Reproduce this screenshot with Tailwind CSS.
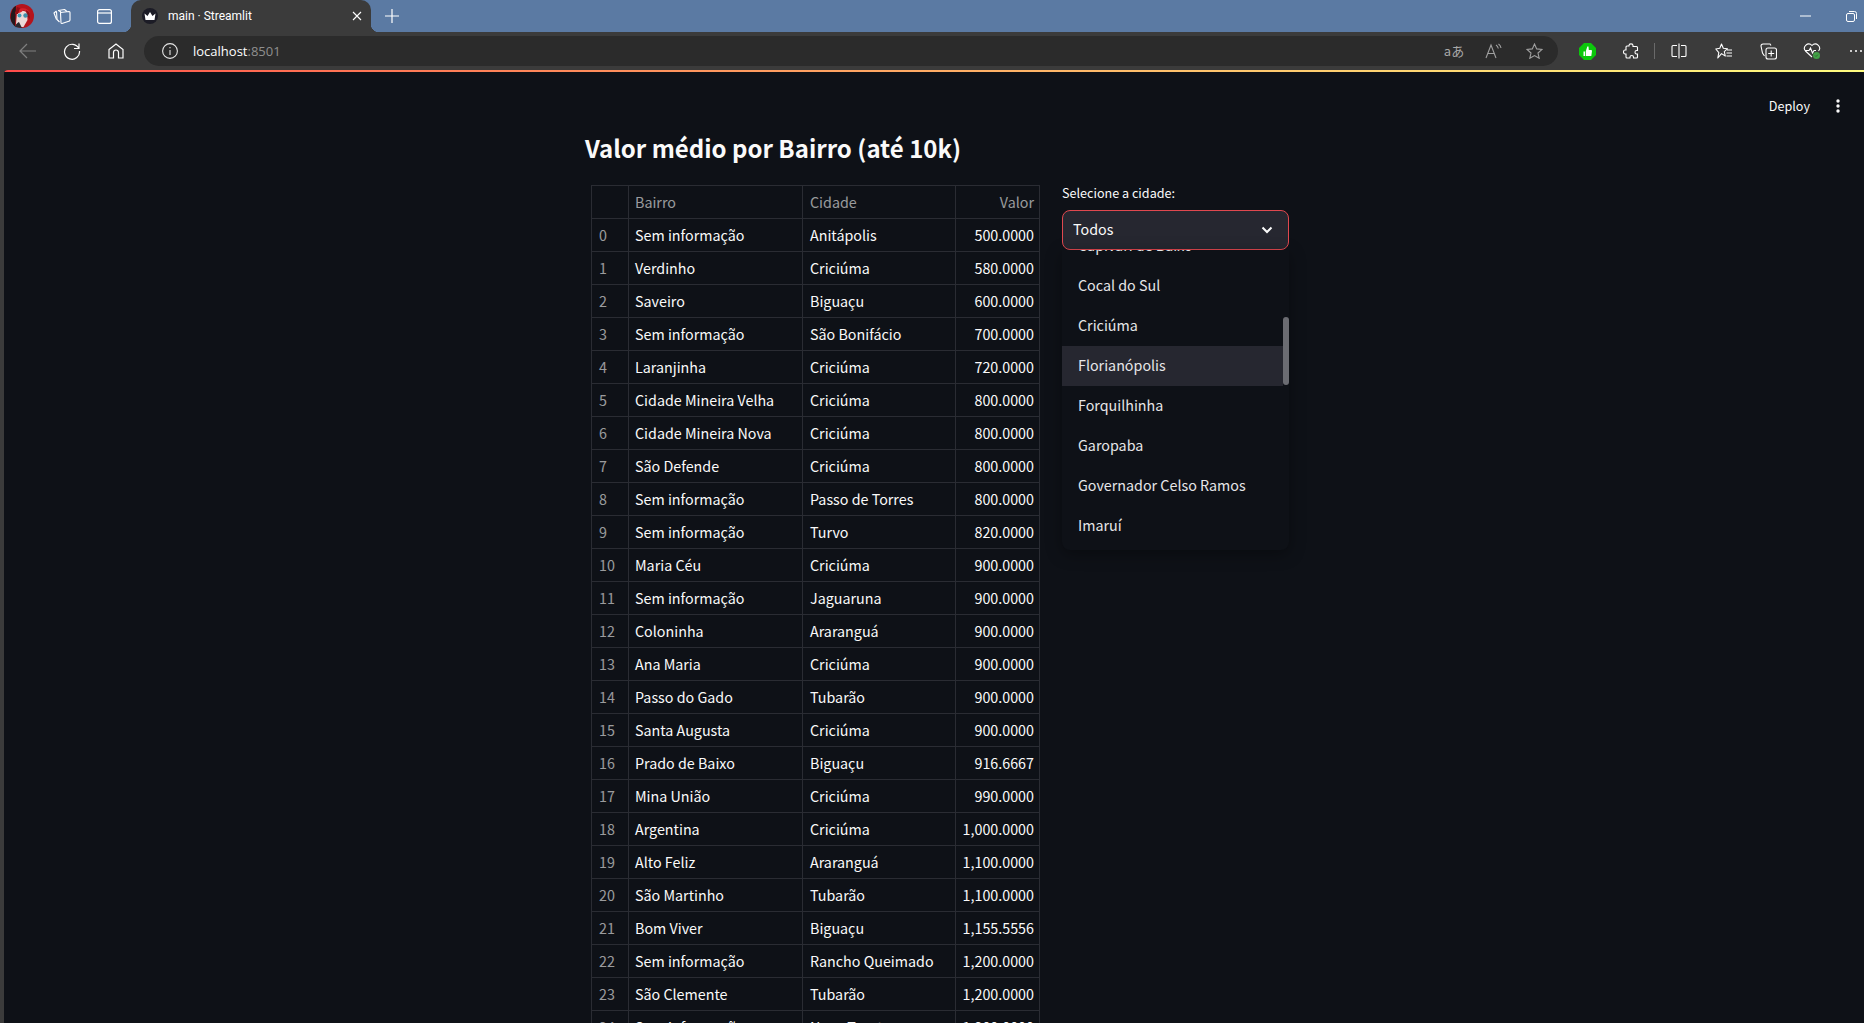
<!DOCTYPE html>
<html lang="pt-BR">
<head>
  <meta charset="UTF-8" />
  <title>main · Streamlit</title>
  <script src="https://cdn.jsdelivr.net/npm/@tailwindcss/browser@4"></script>
</head>
<body class="bg-[#0e1117] text-[#fafafa] overflow-hidden font-['Noto_Sans_CJK_SC','Noto_Sans',sans-serif]">
  <div class="h-[1023px] flex flex-col overflow-hidden">

    <!-- TAB BAR -->
    <div class="h-8 shrink-0 bg-[#5b7aa3] flex items-center text-white">
      <div class="w-11 flex justify-center">
        <svg width="24" height="24" viewBox="0 0 24 24">
          <circle cx="12" cy="12" r="12" fill="#b5141c"/>
          <path d="M0.500 14C1 7 3 3 6 2L5 22.500C2.500 20.500 1 17.500 0.500 14z" fill="#23181c"/>
          <path d="M7 9c2-3 8-3 10 0l0.500 7-4 7H9.500L6 20z" fill="#ecd8d6"/>
          <path d="M5 10c1-6 12-9 15-1-3-1-5-3-7-3-1 3-5 3-8 4z" fill="#d8222a"/>
          <path d="M5 10 7 3l3 1-2 6zM16 6l3 2 1 7-3-3z" fill="#8e0f16"/>
          <circle cx="9.500" cy="11.500" r="2" fill="#3f9ab8"/>
          <circle cx="15.500" cy="11.500" r="2.200" fill="#3f8fa8"/>
          <path d="M5 23c1-3 2-4 4-5l3 6z" fill="#2a2a30"/>
        </svg>
      </div>
      <div class="w-9 flex justify-center">
        <svg width="18" height="18" viewBox="0 0 18 18" fill="none" stroke="white" stroke-width="1.100" stroke-linejoin="round">
          <path d="M7.500 5.500 16 4.500a1 1 0 0 1 1 1V13l-0.500 1-7.500 2.500a1 1 0 0 1-1-.5z"/>
          <path d="M8 5 5.500 3.500 11.500 2.500l2.500 2M6.500 15 4 12.500 3.500 4.500"/>
          <path d="M3.500 4 1 6l2.500 6.500"/>
        </svg>
      </div>
      <div class="w-12 flex justify-center">
        <svg width="15" height="15" viewBox="0 0 15 15" fill="none" stroke="white" stroke-width="1.200">
          <rect x="0.600" y="0.600" width="13.800" height="13.800" rx="2"/>
          <path d="M0.600 4h13.800"/>
        </svg>
      </div>
      <div class="relative ml-[3px] w-[240px] h-8 bg-[#3b3b3b] rounded-t-[10px] flex items-center pl-[11px] pr-[9px]">
        <span class="absolute -left-2 bottom-0 w-2 h-2 bg-[radial-gradient(circle_at_0_0,transparent_8px,#3b3b3b_8.5px)]"></span>
        <span class="absolute -right-2 bottom-0 w-2 h-2 bg-[radial-gradient(circle_at_100%_0,transparent_8px,#3b3b3b_8.5px)]"></span>
        <span class="w-4 h-4 rounded-full bg-[#1c1c26] flex items-center justify-center">
          <svg width="12" height="10" viewBox="0 0 12 10" fill="white"><path d="M0.500 2.500 3.500 5 6 1l2.500 4 3-2.500L10.500 9h-9z"/></svg>
        </span>
        <span class="ml-[10px] flex-1 text-xs leading-4 font-['Roboto',sans-serif]">main · Streamlit</span>
        <svg width="10" height="10" viewBox="0 0 10 10" stroke="white" stroke-width="1.100"><path d="M1 1l8 8M9 1 1 9"/></svg>
      </div>
      <div class="w-[42px] flex justify-center">
        <svg width="14" height="14" viewBox="0 0 14 14" stroke="white" stroke-width="1.200"><path d="M7 0v14M0 7h14"/></svg>
      </div>
      <div class="flex-1"></div>
      <div class="w-[46px] flex justify-center">
        <svg width="11" height="2" viewBox="0 0 11 2" stroke="white"><path d="M0 1h11"/></svg>
      </div>
      <div class="w-[46px] flex justify-center mr-[-10px]">
        <svg width="11" height="11" viewBox="0 0 11 11" fill="none" stroke="white"><rect x="0.500" y="2.500" width="8" height="8" rx="1.500"/><path d="M3 0.500h5.500a2 2 0 0 1 2 2V8"/></svg>
      </div>
    </div>

    <!-- TOOLBAR -->
    <div class="h-[38px] shrink-0 bg-[#3b3b3b] flex items-start pt-1 pl-[6px] text-white overflow-hidden">
      <button class="w-11 shrink-0 h-[30px] flex items-center justify-center">
        <svg width="18" height="16" viewBox="0 0 18 16" fill="none" stroke="#808080" stroke-width="1.200"><path d="M17 8H1M8 1 1 8l7 7"/></svg>
      </button>
      <button class="w-11 shrink-0 h-[30px] flex items-center justify-center">
        <svg width="18" height="18" viewBox="0 0 18 18" fill="none" stroke="white" stroke-width="1.200"><path d="M15.800 6.500A7.500 7.500 0 1 0 16.500 9M16 1.500v5h-5"/></svg>
      </button>
      <button class="w-11 shrink-0 h-[30px] flex items-center justify-center">
        <svg width="16" height="16" viewBox="0 0 16 16" fill="none" stroke="white" stroke-width="1.200"><path d="M1 6.500 8 1l7 5.500V15h-4.500V9.500a2.500 2.500 0 0 0-5 0V15H1z"/></svg>
      </button>

      <div class="ml-[6px] w-[1414px] shrink-0 h-[30px] rounded-full bg-[#2b2b2b] flex items-center pl-[18px] pr-1">
        <svg width="16" height="16" viewBox="0 0 16 16" fill="none" stroke="#e6e6e6" stroke-width="1.100"><circle cx="8" cy="8" r="7.400"/><path d="M8 7v5M8 4v1.300"/></svg>
        <span class="ml-[15px] flex-1 text-[13px] leading-5 font-['Open_Sans',sans-serif]">localhost<span class="text-[#8f8f8f]">:8501</span></span>
        <div class="w-10 flex justify-center text-[13px] leading-5 text-[#a8a8a8] font-['Noto_Sans_CJK_JP',sans-serif]">aあ</div>
        <div class="w-10 flex justify-center">
          <svg width="18" height="16" viewBox="0 0 18 16" fill="none" stroke="#a0a0a0" stroke-width="1.100"><path d="M1 15 6 2l5 13M3 10.500h6M11 2c1.500 1 2 2 2.300 3.500M13.500 1c1.500 1 2.300 2.500 2.500 4"/></svg>
        </div>
        <div class="w-10 flex justify-center">
          <svg width="17" height="16" viewBox="0 0 17 16" fill="none" stroke="#a0a0a0" stroke-width="1.100"><path d="m8.500 1 2.200 4.900 5.300.6-4 3.500 1.200 5.300-4.700-2.700-4.700 2.700L5 10 1 6.500l5.300-.6z"/></svg>
        </div>
      </div>

      <button class="ml-[7px] w-11 shrink-0 h-[30px] flex items-center justify-center">
        <svg width="17" height="17" viewBox="0 0 17 17">
          <path d="M5 0h7l5 5v7l-5 5H5l-5-5V5z" fill="#0cc80c"/>
          <path d="M4.500 8.500H6V13H4.500zM6.800 8.200 8.300 3.500h1.200l0.300 3.500h2.700l0.500 1-0.700 5H6.800z" fill="white"/>
        </svg>
      </button>
      <button class="w-11 shrink-0 h-[30px] flex items-center justify-center">
        <svg width="16" height="17" viewBox="0 0 16 17" fill="none" stroke="white" stroke-width="1.100"><path d="M6 2.500c0-2.200 4-2.200 4 0v1h3.500a1 1 0 0 1 1 1v3h-1c-2 0-2 3.500 0 3.500h1v3a1 1 0 0 1-1 1h-3v-1c0-2-3.500-2-3.500 0v1h-3a1 1 0 0 1-1-1v-3h-1c-2 0-2-4 0-4h1v-3a1 1 0 0 1 1-1H6z"/></svg>
      </button>
      <div class="w-px shrink-0 h-4 mt-[7px] bg-[#6a6a6a] ml-px mr-[2px]"></div>
      <button class="w-11 shrink-0 h-[30px] flex items-center justify-center">
        <svg width="16" height="16" viewBox="0 0 16 16" fill="none" stroke="white" stroke-width="1.100"><path d="M6 2.500H2a1 1 0 0 0-1 1v9a1 1 0 0 0 1 1h4M10 2.500h4a1 1 0 0 1 1 1v9a1 1 0 0 1-1 1h-4M8 0.500v15"/></svg>
      </button>
      <button class="w-11 shrink-0 ml-px h-[30px] flex items-center justify-center">
        <svg width="18" height="16" viewBox="0 0 18 16" fill="none" stroke="white" stroke-width="1.100" stroke-linejoin="round"><path d="m6.500 1 1.800 4.200 4.200.5-3.200 2.900 1 4.400-3.800-2.400L2.800 15l1-5.400L0.800 6l4-0.800zM12 7h5M11.500 10h5.500M11.500 13H17"/></svg>
      </button>
      <button class="w-11 shrink-0 h-[30px] flex items-center justify-center">
        <svg width="17" height="17" viewBox="0 0 17 17" fill="none" stroke="white" stroke-width="1.100"><path d="M11 2.500 10 1H3a2 2 0 0 0-2 2l1.500 7 2 3"/><rect x="6" y="5" width="10.500" height="11" rx="2"/><path d="M11.200 7.500v6M8.200 10.500h6"/></svg>
      </button>
      <button class="w-11 shrink-0 h-[30px] flex items-center justify-center">
        <svg width="18" height="18" viewBox="0 0 18 18" fill="none" stroke="white" stroke-width="1.100">
          <path d="M9 15 2.500 9C-1 5 5 -1 9 3.500 13 -1 19 5 15.500 9"/>
          <path d="M2 8.500h4l1.500-2.500 2 5 1.500-2.500h2"/>
          <circle cx="13.500" cy="13.500" r="3.500" fill="#43a047" stroke="none"/>
          <path d="m12 13.500 1 1 2-2" stroke-width="0.800" stroke="#2e5d30"/>
        </svg>
      </button>
      <button class="w-11 shrink-0 h-[30px] flex items-center justify-center gap-[3px]">
        <span class="w-[2px] h-[2px] bg-white rounded-full"></span>
        <span class="w-[2px] h-[2px] bg-white rounded-full"></span>
        <span class="w-[2px] h-[2px] bg-white rounded-full"></span>
      </button>
    </div>

    <!-- PAGE -->
    <div class="flex-1 min-h-0 bg-[#3b3b3b] pl-1">
      <main class="relative h-full bg-[#0e1117] overflow-hidden rounded-tl-[4px]">
        <div class="h-[2px] bg-gradient-to-r from-[#ff4b4b] to-[#fffd80]"></div>

        <!-- streamlit header -->
        <div class="absolute top-[22px] right-0 flex items-center h-7 text-[12.6px]">
          <span class="leading-5">Deploy</span>
          <svg class="ml-[26px] mr-6" width="4" height="14" viewBox="0 0 4 14" fill="#fafafa">
            <circle cx="2" cy="2" r="1.700"/><circle cx="2" cy="7" r="1.700"/><circle cx="2" cy="12" r="1.700"/>
          </svg>
        </div>

        <div class="pl-[581px] pt-[56px]">
          <h3 class="text-2xl leading-10 font-semibold">Valor médio por Bairro (até 10k)</h3>

          <div class="flex mt-[17px] ml-[6px] items-start">
            <!-- TABELA -->
            <table class="w-[449px] table-fixed border-collapse text-[14.3px]">
              <colgroup>
                <col class="w-[37px]" /><col class="w-[174px]" /><col class="w-[153px]" /><col class="w-[84px]" />
              </colgroup>
              <thead>
                <tr class="h-[33px] text-[#fafafa]/60">
                  <th class="border border-[#2a2c33] px-[7px] font-normal"></th>
                  <th class="border border-[#2a2c33] px-[6px] font-normal text-left">Bairro</th>
                  <th class="border border-[#2a2c33] px-[7px] font-normal text-left">Cidade</th>
                  <th class="border border-[#2a2c33] px-[5px] font-normal text-right">Valor</th>
                </tr>
              </thead>
              <tbody id="tabela"></tbody>
            </table>

            <!-- SELECT -->
            <div class="ml-[22px] w-[227px] relative">
              <label class="block text-[12.6px] leading-5 mt-[-2px] mb-[7px]">Selecione a cidade:</label>
              <div class="h-10 rounded-lg bg-[#262730] border border-[#e0484f] flex items-center justify-between pl-[10px] pr-[15px]">
                <span class="text-[14.3px] leading-6 pb-[2px]">Todos</span>
                <svg width="12" height="8" viewBox="0 0 12 8" fill="none" stroke="#fafafa" stroke-width="2"><path d="m1.500 1.500 4.500 4.500 4.500-4.500"/></svg>
              </div>
              <!-- dropdown -->
              <div class="absolute top-full left-0 w-[227px] h-[300px] bg-[#0e1117] rounded-b-lg overflow-hidden shadow-[0_4px_16px_rgba(0,0,0,0.35)]">
                <div id="opcoes" class="-mt-6 text-[#e6e6e8]"></div>
                <div class="absolute right-0 top-[67px] w-[6px] h-[68px] rounded-full bg-[#6b6c72]"></div>
              </div>
            </div>
          </div>
        </div>
      </main>
    </div>
  </div>

  <script>
    const linhas = [
      ['Sem informação', 'Anitápolis', '500.0000'],
      ['Verdinho', 'Criciúma', '580.0000'],
      ['Saveiro', 'Biguaçu', '600.0000'],
      ['Sem informação', 'São Bonifácio', '700.0000'],
      ['Laranjinha', 'Criciúma', '720.0000'],
      ['Cidade Mineira Velha', 'Criciúma', '800.0000'],
      ['Cidade Mineira Nova', 'Criciúma', '800.0000'],
      ['São Defende', 'Criciúma', '800.0000'],
      ['Sem informação', 'Passo de Torres', '800.0000'],
      ['Sem informação', 'Turvo', '820.0000'],
      ['Maria Céu', 'Criciúma', '900.0000'],
      ['Sem informação', 'Jaguaruna', '900.0000'],
      ['Coloninha', 'Araranguá', '900.0000'],
      ['Ana Maria', 'Criciúma', '900.0000'],
      ['Passo do Gado', 'Tubarão', '900.0000'],
      ['Santa Augusta', 'Criciúma', '900.0000'],
      ['Prado de Baixo', 'Biguaçu', '916.6667'],
      ['Mina União', 'Criciúma', '990.0000'],
      ['Argentina', 'Criciúma', '1,000.0000'],
      ['Alto Feliz', 'Araranguá', '1,100.0000'],
      ['São Martinho', 'Tubarão', '1,100.0000'],
      ['Bom Viver', 'Biguaçu', '1,155.5556'],
      ['Sem informação', 'Rancho Queimado', '1,200.0000'],
      ['São Clemente', 'Tubarão', '1,200.0000'],
      ['Sem informação', 'Nova Trento', '1,200.0000']
    ];

    document.getElementById('tabela').innerHTML = linhas.map((l, i) => `
      <tr class="h-[33px]">
        <td class="border border-[#2a2c33] px-[7px] text-[#fafafa]/60">${i}</td>
        <td class="border border-[#2a2c33] px-[6px]">${l[0]}</td>
        <td class="border border-[#2a2c33] px-[7px]">${l[1]}</td>
        <td class="border border-[#2a2c33] px-[5px] text-right">${l[2]}</td>
      </tr>`).join('');

    const cidades = ['Capivari de Baixo', 'Cocal do Sul', 'Criciúma', 'Florianópolis', 'Forquilhinha', 'Garopaba', 'Governador Celso Ramos', 'Imaruí'];
    document.getElementById('opcoes').innerHTML = cidades.map(c => `
      <div class="h-10 pl-4 pb-[2px] flex items-center text-[14.3px] mr-[6px] ${c === 'Florianópolis' ? 'bg-[#262730]' : ''}">${c}</div>`).join('');
  </script>
</body>
</html>
